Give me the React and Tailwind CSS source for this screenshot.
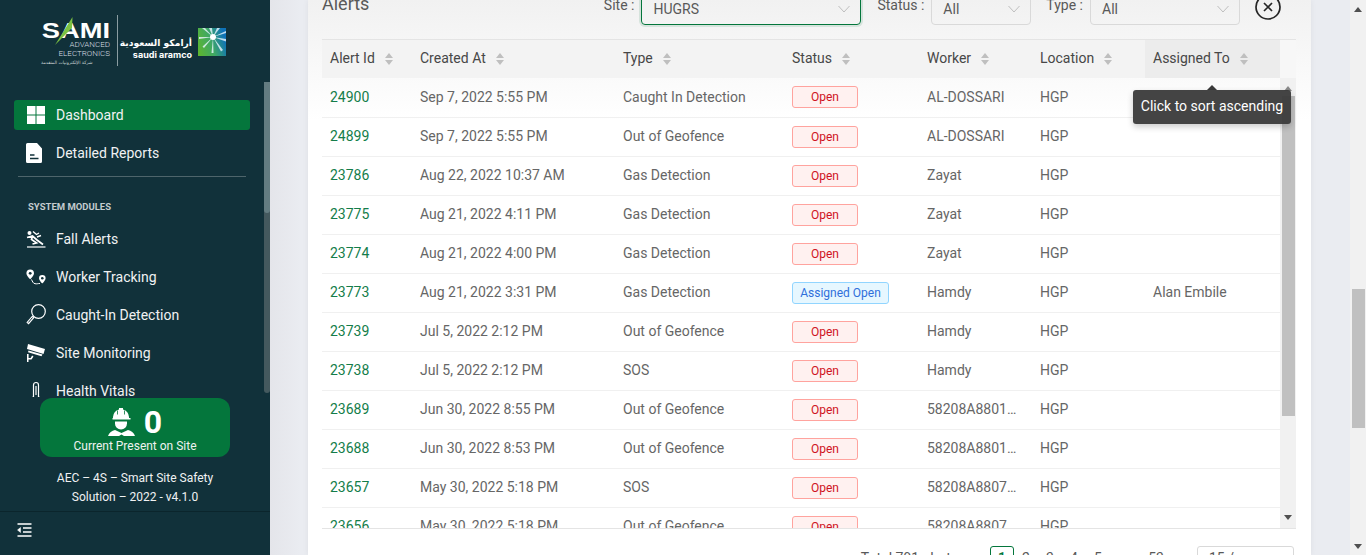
const menuTop = [
  { label: "Dashboard", icon: DashboardIcon, active: true },
  { label: "Detailed Reports", icon: ReportIcon },
];

const modules = [
  { label: "Fall Alerts", icon: FallIcon },
  { label: "Worker Tracking", icon: TrackingIcon },
  { label: "Caught-In Detection", icon: LensIcon },
  { label: "Site Monitoring", icon: CameraIcon },
  { label: "Health Vitals", icon: VitalsIcon },
];

const columns = ["Alert Id", "Created At", "Type", "Status", "Worker", "Location", "Assigned To"];

const alerts = [
  { id: 24900, at: "Sep 7, 2022 5:55 PM", type: "Caught In Detection", status: "Open", worker: "AL-DOSSARI", assigned: "" },
  { id: 24899, at: "Sep 7, 2022 5:55 PM", type: "Out of Geofence", status: "Open", worker: "AL-DOSSARI", assigned: "" },
  { id: 23786, at: "Aug 22, 2022 10:37 AM", type: "Gas Detection", status: "Open", worker: "Zayat", assigned: "" },
  { id: 23775, at: "Aug 21, 2022 4:11 PM", type: "Gas Detection", status: "Open", worker: "Zayat", assigned: "" },
  { id: 23774, at: "Aug 21, 2022 4:00 PM", type: "Gas Detection", status: "Open", worker: "Zayat", assigned: "" },
  { id: 23773, at: "Aug 21, 2022 3:31 PM", type: "Gas Detection", status: "Assigned Open", worker: "Hamdy", assigned: "Alan Embile" },
  { id: 23739, at: "Jul 5, 2022 2:12 PM", type: "Out of Geofence", status: "Open", worker: "Hamdy", assigned: "" },
  { id: 23738, at: "Jul 5, 2022 2:12 PM", type: "SOS", status: "Open", worker: "Hamdy", assigned: "" },
  { id: 23689, at: "Jun 30, 2022 8:55 PM", type: "Out of Geofence", status: "Open", worker: "58208A8801234567", assigned: "" },
  { id: 23688, at: "Jun 30, 2022 8:53 PM", type: "Out of Geofence", status: "Open", worker: "58208A8801234567", assigned: "" },
  { id: 23657, at: "May 30, 2022 5:18 PM", type: "SOS", status: "Open", worker: "58208A8807234567", assigned: "" },
  { id: 23656, at: "May 30, 2022 5:18 PM", type: "Out of Geofence", status: "Open", worker: "58208A8807234567", assigned: "" },
];

function DashboardIcon() {
  return (
    <svg width="20" height="20" viewBox="0 0 20 20" fill="#fff">
      <rect x="1" y="1" width="8.5" height="8.5" />
      <rect x="10.5" y="1" width="8.5" height="8.5" />
      <rect x="1" y="10.5" width="8.5" height="8.5" />
      <rect x="10.5" y="10.5" width="8.5" height="8.5" />
    </svg>
  );
}

function ReportIcon() {
  return (
    <svg width="20" height="20" viewBox="0 0 20 20">
      <path d="M1.500 0h9.500l5 5.500V18.500a1.500 1.500 0 0 1-1.500 1.500h-13a1.500 1.500 0 0 1-1.500-1.500v-17a1.500 1.500 0 0 1 1.500-1.500z" fill="#fff" />
      <path d="M4 12h4.500M4 15.500h8.500" stroke="#11313a" strokeWidth="1.500" />
    </svg>
  );
}

function FallIcon() {
  return (
    <svg width="20" height="20" viewBox="0 0 20 20" fill="none" stroke="#fff" strokeWidth="1.700">
      <circle cx="3.500" cy="4" r="2" fill="#fff" stroke="none" />
      <path d="M1 8.500l5.500-1.500 4.500 4 6 4.500M6.500 7l-1 3.500 5 3.500-4 1" />
      <path d="M7 2.500l3.500 3 2.500-1.500M11 8l4-1.500" strokeWidth="1.400" />
      <path d="M1 18h18.500" strokeWidth="1.200" />
    </svg>
  );
}

function TrackingIcon() {
  return (
    <svg width="20" height="20" viewBox="0 0 20 20" fill="none" stroke="#fff">
      <path d="M4.200 2.500a3.800 3.800 0 0 0-3.800 3.800c0 2.500 3.800 6 3.800 6s3.800-3.500 3.800-6a3.800 3.800 0 0 0-3.800-3.800z" fill="#fff" stroke="none" />
      <circle cx="4.200" cy="6.300" r="1.400" fill="#11313a" stroke="none" />
      <path d="M16.300 8a3.300 3.300 0 0 0-3.300 3.300c0 2.200 3.300 5.200 3.300 5.200s3.300-3 3.300-5.200A3.300 3.300 0 0 0 16.300 8z" fill="#fff" stroke="none" />
      <circle cx="16.300" cy="11.300" r="1.300" fill="#11313a" stroke="none" />
      <path d="M5.500 12.500c1 2 1.500 3.800 3.500 4.200s2.500-.2 5-.2" strokeWidth="1" />
    </svg>
  );
}

function LensIcon() {
  return (
    <svg width="20" height="22" viewBox="0 0 20 22" fill="none" stroke="#fff">
      <circle cx="12.500" cy="7.500" r="6.800" strokeWidth="1.200" />
      <path d="M7.500 12.500L1.500 19.500" strokeWidth="3" />
      <path d="M6.500 13.500L2.300 18.500" strokeWidth="1" stroke="#11313a" />
    </svg>
  );
}

function CameraIcon() {
  return (
    <svg width="20" height="20" viewBox="0 0 20 20" fill="#fff">
      <path d="M2 1l17 5-1.500 5L1 6z" />
      <path d="M2.500 7.500l14 4-1 1.800-13.500-4z" />
      <path d="M1 11v8h1.500v-2.500h3l2-3-1.400-1-1.500 2.500h-2V11z" />
    </svg>
  );
}

function VitalsIcon() {
  return (
    <svg width="20" height="20" viewBox="0 0 20 20" fill="none" stroke="#fff" strokeWidth="1.200">
      <path d="M7.500 16V4a2.500 2.500 0 0 1 5 0v12" />
      <path d="M10 5v9" />
      <path d="M6.500 16h1M12.500 16h1" />
    </svg>
  );
}

function WorkerIcon() {
  return (
    <svg width="27" height="28" viewBox="0 0 27 28" fill="#fff">
      <path d="M5 9a8.500 8.500 0 0 1 6-7.500V0h4v1.500A8.500 8.500 0 0 1 21 9v1h1.500v1.500h-18V10H5z" />
      <path d="M9.500 2.500v4M16.500 2.500v4" stroke="#04763c" strokeWidth="0.800" />
      <path d="M7 13.500h12v2a6 6 0 0 1-12 0z" />
      <path d="M0 28c1-3.500 4-5 7-6l6.500 3 6.500-3c3 1 6 2.500 7 6H16l-2.500-1.500L11 28z" />
    </svg>
  );
}

function CollapseIcon() {
  return (
    <svg width="15" height="14" viewBox="0 0 15 14" fill="none" stroke="#fff" strokeWidth="1.300">
      <path d="M0.500 1h14M6 5h8.500M6 9h8.500M0.500 13h14" />
      <path d="M3.500 4.500v5L0.500 7z" fill="#fff" strokeWidth="0.500" />
    </svg>
  );
}

function AramcoMark() {
  return (
    <svg width="28" height="28" viewBox="0 0 28 28">
      <defs>
        <linearGradient id="aramcoFill" x1="0" y1="0.800" x2="1" y2="0.500">
          <stop offset="0" stopColor="#5cb531" />
          <stop offset="0.500" stopColor="#3fa864" />
          <stop offset="1" stopColor="#0f72b8" />
        </linearGradient>
      </defs>
      <rect width="28" height="28" fill="url(#aramcoFill)" />
      <g fill="#eaf6ff" opacity="0.800">
        <path d="M15 9L4 0h3zM15 9L11 0h3zM15 9L19 0h3zM15 9L28 3v2zM15 9L28 11v2.500zM15 9L25 22l-2 1.500zM15 9L15.500 25h-2zM15 9L6 20l-1.500-1.500zM15 9L1 9v2z" />
      </g>
      <circle cx="15" cy="9" r="3" fill="#fff" />
    </svg>
  );
}

function Logo() {
  return (
    <div className="h-[82px] pl-[41px] pt-[15px] flex items-start shrink-0">
      <div className="relative w-[69px] h-[50px] text-white text-right">
        <div className="pt-[8px] font-[family-name:'Liberation_Sans',sans-serif] font-bold text-[22px] leading-[16px] whitespace-nowrap origin-right scale-x-[1.240]">SAMI</div>
        <svg className="absolute left-[14px] top-[2px]" width="20" height="30" viewBox="0 0 20 30">
          <path d="M17.500 0L17 11 0 28z" fill="#7cc242" />
        </svg>
        <div className="text-[8px] leading-[8px] font-light mt-[2px] text-[#d8dee0]">ADVANCED</div>
        <div className="text-[8px] leading-[9px] font-light whitespace-nowrap text-[#d8dee0]">ELECTRONICS</div>
        <div dir="rtl" className="text-[4.500px] leading-[7px] mt-[1px] text-left whitespace-nowrap font-[family-name:'DejaVu_Sans',sans-serif] text-[#c9d1d3]">شركة الإلكترونيات المتقدمة</div>
      </div>
      <div className="w-px h-[51px] bg-[#8a9ca1] ml-[7px]" />
      <div className="ml-[7px] w-[67px] pt-[22px] text-white text-right">
        <div dir="rtl" className="text-[9.200px] leading-[11px] font-bold text-left whitespace-nowrap font-[family-name:'DejaVu_Sans',sans-serif]">أرامكو السعودية</div>
        <div className="mt-[2px] text-[9px] leading-[9px] font-bold whitespace-nowrap font-[family-name:Inter,sans-serif]">saudi aramco</div>
      </div>
      <div className="ml-[6px] mt-[13px]">
        <AramcoMark />
      </div>
    </div>
  );
}

function MenuItem({ item }) {
  const Icon = item.icon;
  return (
    <div className={"flex items-center h-[30px] ml-[14px] mr-[20px] pl-[12px] rounded-[3px] mb-2 last:mb-0 " + (item.active ? "bg-[#04763c]" : "")}>
      <span className="w-[20px] h-[20px] flex items-center justify-center shrink-0">
        <Icon />
      </span>
      <span className="ml-[10px] text-[14px] font-normal text-[#f0f2f3] whitespace-nowrap">{item.label}</span>
    </div>
  );
}

function Sidebar() {
  return (
    <aside className="w-[270px] h-full shrink-0 bg-[#11313a] flex flex-col">
      <Logo />
      <div className="relative flex-1 overflow-hidden pt-[18px]">
        <MenuItem item={menuTop[0]} />
        <MenuItem item={menuTop[1]} />
        <div className="h-px bg-[#4e656b] ml-[18px] mr-[24px] mt-[8px]" />
        <div className="pl-[28px] mt-[24px] mb-[12px] text-[9.500px] leading-[11px] font-bold text-[#c3cbce]">SYSTEM MODULES</div>
        {modules.map((m) => (
          <MenuItem key={m.label} item={m} />
        ))}
        {/* scrollbar overlay */}
        <div className="absolute right-0 top-0 w-[6px] h-[311px] bg-[#44595e] rounded-b-[3px]">
          <div className="h-[131px] bg-[#637c81] rounded-b-[3px]" />
        </div>
      </div>
      <div className="shrink-0 h-[158px] flex flex-col items-center">
        <div className="w-[190px] h-[59px] mt-[1px] bg-[#04763c] rounded-[12px] flex flex-col items-center text-white">
          <div className="flex items-center h-[39px] pt-[8px]">
            <WorkerIcon />
            <span className="ml-[9px] text-[32px] leading-[32px] font-bold">0</span>
          </div>
          <div className="mt-[2px] text-[12px] leading-[14px] font-normal text-[#eef2f0]">Current Present on Site</div>
        </div>
        <div className="mt-[12px] w-full text-center text-[12px] leading-[19px] font-normal text-[#f0f2f3]">
          <div>AEC – 4S – Smart Site Safety</div>
          <div>Solution – 2022 - v4.1.0</div>
        </div>
        <div className="mt-[4px] w-full border-t border-[#0b252c] pl-[17px] pt-[11px]">
          <CollapseIcon />
        </div>
      </div>
    </aside>
  );
}

function SortIcon() {
  return (
    <svg width="10" height="14" viewBox="0 0 10 14" fill="#bfbfbf" className="ml-[9px] shrink-0">
      <path d="M5 1l4 5H1z" />
      <path d="M5 13l4-5H1z" />
    </svg>
  );
}

function Chevron() {
  return (
    <svg width="14" height="8" viewBox="0 0 14 8" fill="none" stroke="#bfbfbf" strokeWidth="1">
      <path d="M1.500 1L7 7l5.500-6" />
    </svg>
  );
}

function Select({ value, focused, className }) {
  return (
    <div
      className={
        "h-[32px] rounded-[4px] border flex items-center justify-between pl-[11px] pr-[9px] text-[14px] text-[#595959] " +
        (focused ? "border-[#04763c] shadow-[0_0_0_2px_rgba(4,118,60,0.12)] " : "border-[#d9d9d9] ") +
        className
      }
    >
      <span>{value}</span>
      <Chevron />
    </div>
  );
}

function ColGroup() {
  return (
    <colgroup>
      <col className="w-[90px]" />
      <col className="w-[203px]" />
      <col className="w-[169px]" />
      <col className="w-[135px]" />
      <col className="w-[113px]" />
      <col className="w-[113px]" />
      <col className="w-[135px]" />
    </colgroup>
  );
}

function StatusTag({ status }) {
  if (status === "Open") {
    return (
      <span className="inline-flex items-center justify-center w-[66px] h-[22px] rounded-[3px] border border-[#ffa39e] bg-[#fff1f0] text-[12px] text-[#cf1322]">
        Open
      </span>
    );
  }
  return (
    <span className="inline-flex items-center justify-center w-[97px] h-[22px] rounded-[3px] border border-[#91d5ff] bg-[#e6f7ff] text-[12px] text-[#2f6fdb]">
      {status}
    </span>
  );
}

function AlertsTable() {
  return (
    <div className="relative w-[974px] h-[490px] border-t border-[#e4e4e4] border-b overflow-hidden flex flex-col shrink-0">
      <div className="flex h-[38px] shrink-0 bg-[#f3f3f3]">
        <table className="w-[958px] table-fixed border-collapse">
          <ColGroup />
          <thead>
            <tr className="h-[38px]">
              {columns.map((c) => (
                <th key={c} className={"px-2 pb-[1px] text-left text-[14px] font-normal text-[#474747] " + (c === "Assigned To" ? "bg-[#ececec]" : "")}>
                  <span className="flex items-center">
                    {c}
                    <SortIcon />
                  </span>
                </th>
              ))}
            </tr>
          </thead>
        </table>
        <div className="flex-1 bg-[#f7f7f7]" />
      </div>
      <div className="flex flex-1 min-h-0">
        <div className="w-[958px] h-[450px] overflow-hidden">
          <table className="w-[958px] table-fixed border-collapse">
            <ColGroup />
            <tbody>
              {alerts.map((a) => (
                <tr key={a.id} className="h-[39px] border-b border-[#f0f0f0] text-[14px] text-[#666]">
                  <td className="px-2 text-[#147d4a]">{a.id}</td>
                  <td className="px-2">{a.at}</td>
                  <td className="px-2">{a.type}</td>
                  <td className="px-2 leading-none">
                    <StatusTag status={a.status} />
                  </td>
                  <td className="px-2 truncate">{a.worker}</td>
                  <td className="px-2">HGP</td>
                  <td className="px-2">{a.assigned}</td>
                </tr>
              ))}
            </tbody>
          </table>
        </div>
        <div className="w-[16px] bg-[#f1f1f1] flex flex-col items-center">
          <div className="w-0 h-0 mt-[8px] border-x-[4px] border-x-transparent border-b-[5px] border-b-[#8a8a8a]" />
          <div className="w-[13px] h-[320px] mt-[5px] bg-[#c0c0c0]" />
          <div className="w-0 h-0 mt-auto mb-[8px] border-x-[4px] border-x-transparent border-t-[5px] border-t-[#505050]" />
        </div>
      </div>
    </div>
  );
}

function Pagination() {
  return (
    <div className="flex items-start justify-end pr-[2px] mt-[17px] h-[32px] text-[14px] leading-[24px] text-[#595959] w-[974px]">
      <span className="mr-[8px]">Total 791 alerts</span>
      <span className="w-[24px] text-center text-[#bfbfbf]">‹</span>
      <span className="w-[24px] h-[24px] rounded-[3px] border border-[#04763c] text-[#04763c] font-medium text-center leading-[22px]">1</span>
      {["2", "3", "4", "5"].map((n) => (
        <span key={n} className="w-[24px] text-center">{n}</span>
      ))}
      <span className="w-[34px] text-center text-[#bfbfbf]">•••</span>
      <span className="w-[24px] text-center">53</span>
      <span className="w-[24px] text-center">›</span>
      <div className="ml-[5px] w-[97px] h-[24px] rounded-[3px] border border-[#d9d9d9] pl-[11px] leading-[22px]">15 / page</div>
    </div>
  );
}

function Tooltip() {
  return (
    <div className="absolute left-[825px] top-[85px] z-10">
      <div className="w-0 h-0 mx-auto border-x-[5px] border-x-transparent border-b-[5px] border-b-[#3a3a3a]" />
      <div className="w-[158px] h-[34px] bg-[#3a3a3a]/95 rounded-[3px] text-white text-[14px] leading-[33px] text-center whitespace-nowrap shadow-[0_3px_6px_rgba(0,0,0,0.2)]">
        Click to sort ascending
      </div>
    </div>
  );
}

function PageScrollbar() {
  return (
    <div className="w-[16px] h-full shrink-0 bg-[#f1f1f1] flex flex-col items-center">
      <div className="w-0 h-0 mt-[7px] border-x-[4px] border-x-transparent border-b-[5px] border-b-[#505050]" />
      <div className="w-[13px] h-[139px] mt-[277px] bg-[#c0c0c0]" />
      <div className="w-0 h-0 mt-auto mb-[6px] border-x-[4px] border-x-transparent border-t-[5px] border-t-[#505050]" />
    </div>
  );
}

export default function App() {
  return (
    <div className="flex h-[555px] w-[1366px] overflow-hidden font-[family-name:Roboto,sans-serif] bg-[#e9ebf0]">
      <Sidebar />
      <main className="flex-1 h-full pl-[38px] pr-[39px] overflow-hidden bg-[linear-gradient(to_right,#e4e5ea,#eaecf1_30px)]">
        <div className="relative flow-root w-[1003px] h-full pl-[14px] pr-[15px] bg-[linear-gradient(to_bottom,#f1f1f1,#ffffff_120px)] shadow-[0_0_6px_rgba(0,0,0,0.06)]">
          <div className="flex items-start -mt-[7px] mb-[14px] w-[974px] h-[32px] text-[14px] text-[#595959]">
            <span className="text-[18px] leading-[24px] -mt-[1px]">Alerts</span>
            <span className="ml-auto leading-[24px] mr-[7px]">Site :</span>
            <Select value="HUGRS" focused className="w-[220px]" />
            <span className="ml-[16px] mr-[7px] leading-[24px]">Status :</span>
            <Select value="All" className="w-[100px]" />
            <span className="ml-[15px] mr-[7px] leading-[24px]">Type :</span>
            <Select value="All" className="w-[150px]" />
            <svg className="ml-[15px] shrink-0 mr-[15px] mt-[1px]" width="26" height="26" viewBox="0 0 26 26" fill="none" stroke="#262626" strokeWidth="1.700">
              <circle cx="13" cy="13" r="12" />
              <path d="M9 9l8 8M17 9l-8 8" />
            </svg>
          </div>
          <AlertsTable />
          <Pagination />
          <Tooltip />
        </div>
      </main>
      <PageScrollbar />
    </div>
  );
}
